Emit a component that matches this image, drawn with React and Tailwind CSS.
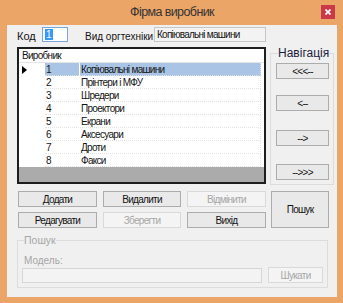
import React from 'react';

const rows = [
  'Копіювальні машини',
  'Прінтери і МФУ',
  'Шредери',
  'Проектори',
  'Екрани',
  'Аксесуари',
  'Дроти',
  'Факси',
];

function Btn({ children, disabled, className = '' }) {
  const look = disabled
    ? 'border-[#d9d9d9] bg-[#f4f4f4] text-[#a6a6a6]'
    : 'border-[#acacac] bg-[#e9e9e9] text-[#141414]';
  return (
    <div className={`flex items-center justify-center border whitespace-nowrap text-[10px] tracking-[-0.7px] ${look} ${className}`}>
      {children}
    </div>
  );
}

export default function App() {
  return (
    <div className="w-[343px] h-[303px] bg-[#eaa567] flex flex-col font-['Liberation_Sans',sans-serif] text-[#141414] select-none">
      {/* title bar */}
      <div className="relative h-[25px] flex items-center justify-center">
        <span className="text-[12.5px] leading-[16px] tracking-[-0.6px] text-[#333] -mt-[1px] ml-[1px]">Фірма виробник</span>
        <div className="absolute right-[8px] top-[5px] w-[14px] h-[14px] bg-[#c9394a] flex items-center justify-center">
          <svg width="6" height="6" viewBox="0 0 6 6">
            <path d="M0.5 0.5 L5.5 5.5 M5.5 0.5 L0.5 5.5" stroke="#fff" strokeWidth="1.6" />
          </svg>
        </div>
      </div>

      {/* client area */}
      <div className="mx-[7px] w-[330px] h-[272px] bg-[#f0f0f0] flex flex-col text-[10px] leading-[13px] whitespace-nowrap">
        {/* top fields */}
        <div className="flex items-start h-[15px] mt-[2px] pl-[10px]">
          <span className="mt-[3px] w-[25px] text-[11px]">Код</span>
          <div className="w-[26px] h-[15px] border border-[#7ba5dc] bg-white flex items-center pl-[2px]">
            <span className="bg-[#3399ff] text-white px-[1px] leading-[11px]">1</span>
          </div>
          <span className="mt-[3px] ml-[17px] w-[69px]">Вид оргтехніки</span>
          <div className="w-[112px] h-[15px] border border-[#c6c6c6] bg-[#f3f3f3] flex items-center pl-[2px] tracking-[-0.75px]">
            Копіювальні машини
          </div>
        </div>

        {/* middle */}
        <div className="flex mt-[5px] pl-[10px]">
          <div className="w-[249px] flex flex-col">
            <div className="h-[137px] border-2 border-[#1e1e1e] bg-[#ababab] flex flex-col tracking-[-0.7px]">
              <div className="h-[14px] bg-white flex items-center pl-[3px] border-b border-[#e4e4e4]">Виробник</div>
              {rows.map((name, i) => (
                <div key={name} className="h-[13px] bg-white flex">
                  <div className="w-[26px] flex items-center pl-[3px]">
                    {i === 0 && (
                      <svg width="5" height="8" viewBox="0 0 5 8">
                        <path d="M0 0 L5 4 L0 8 Z" fill="#000" />
                      </svg>
                    )}
                  </div>
                  <div className={`w-[34px] flex items-center pl-[1px] border-b border-dotted border-[#e2e2e2] ${i === 0 ? 'bg-[#a9c4e4]' : ''}`}>
                    {i + 1}
                  </div>
                  <div className="w-[1px] bg-white" />
                  <div className={`w-[181px] flex items-center pl-[1px] border-b border-r border-dotted border-[#e2e2e2] ${i === 0 ? 'bg-[#a9c4e4]' : ''}`}>
                    {name}
                  </div>
                </div>
              ))}
            </div>
            <div className="flex gap-[6px] mt-[7px] pl-[1px]">
              <Btn className="w-[79px] h-[16px]">Додати</Btn>
              <Btn className="w-[78px] h-[16px]">Видалити</Btn>
              <Btn disabled className="w-[79px] h-[16px]">Відмінити</Btn>
            </div>
            <div className="flex gap-[6px] mt-[5px] pl-[1px]">
              <Btn className="w-[79px] h-[16px]">Редагувати</Btn>
              <Btn disabled className="w-[78px] h-[16px]">Зберегти</Btn>
              <Btn className="w-[79px] h-[16px]">Вихід</Btn>
            </div>
          </div>

          <div className="w-[64px] ml-[4px] flex flex-col">
            <fieldset className="h-[138px] border border-[#dcdcdc] pl-[5px] pb-[4px]">
              <legend className="ml-[2px] px-0 leading-[13px] text-[12px] text-[#1c1c3c]">Навігація</legend>
              <div className="flex flex-col">
                <Btn className="w-[53px] h-[16px] mt-[3px]">&lt;&lt;&lt;--</Btn>
                <Btn className="w-[53px] h-[16px] mt-[16px]">&lt;--</Btn>
                <Btn className="w-[53px] h-[16px] mt-[19px]">--&gt;</Btn>
                <Btn className="w-[53px] h-[16px] mt-[18px]">--&gt;&gt;&gt;</Btn>
              </div>
            </fieldset>
            <Btn className="w-[58px] h-[37px] ml-[1px] mt-[6px] font-medium text-[#1a1a40]">Пошук</Btn>
          </div>
        </div>

        {/* search group (disabled) */}
        <fieldset className="ml-[10px] mt-[6px] w-[311px] border border-[#dcdcdc] pl-[4px] pb-[4px] text-[#a6a6a6]">
          <legend className="ml-[2px] px-0 leading-[13px] text-[10.5px]">Пошук</legend>
          <div className="mt-[7px] ml-[2px] text-[10px]">Модель:</div>
          <div className="flex items-end">
            <div className="w-[240px] h-[15px] border border-[#d6d6d6] bg-[#f3f3f3]" />
            <Btn disabled className="w-[55px] h-[16px] ml-[6px]">Шукати</Btn>
          </div>
        </fieldset>
      </div>
    </div>
  );
}
